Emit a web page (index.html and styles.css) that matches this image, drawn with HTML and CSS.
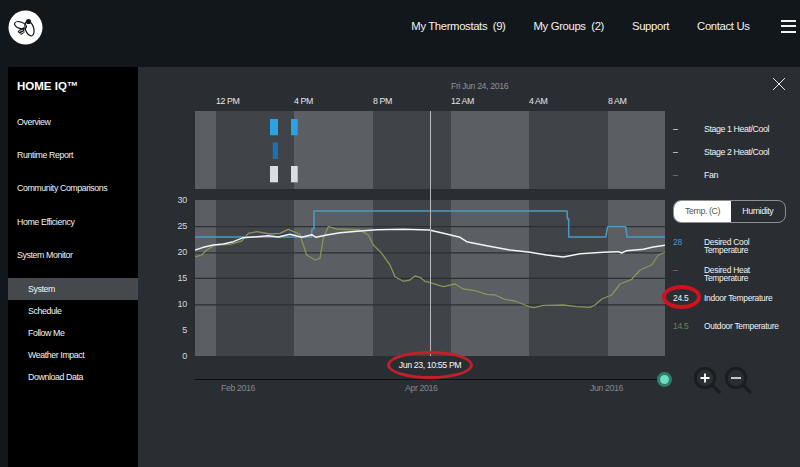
FILE: index.html
```html
<!DOCTYPE html>
<html lang="en">
<head>
<meta charset="utf-8">
<title>Home IQ</title>
<link rel="stylesheet" href="styles.css">
</head>
<body>
<header class="topbar">
  <svg class="logo" viewBox="8 10 35 35" width="35" height="35" aria-hidden="true">
    <circle cx="25.5" cy="27.500" r="17" fill="#fff"/>
    <g fill="none" stroke="#12171b" stroke-width="1.200">
      <ellipse cx="20.500" cy="25.300" rx="6.200" ry="3.200" transform="rotate(18 20.500 25.300)"/>
      <ellipse cx="29.500" cy="28.500" rx="4.200" ry="7.600" transform="rotate(-18 29.500 28.500)"/>
    </g>
    <circle cx="28.500" cy="21.500" r="2.600" fill="#12171b"/>
    <path d="M24 27l-5 3-1.500 2 2.500 1.500 1 1.500 3.500-2.500z" fill="#12171b"/>
    <path d="M19 31.500l4-1.500M20.500 33.500l3.500-1.800" stroke="#fff" stroke-width=".8"/>
  </svg>
  <nav class="topnav">
    <a>My Thermostats&nbsp; (9)</a>
    <a>My Groups&nbsp; (2)</a>
    <a>Support</a>
    <a>Contact Us</a>
    <span class="burger"><i></i><i></i><i></i></span>
  </nav>
</header>
<div class="main">
  <aside class="sidebar">
    <h1 class="brand">HOME IQ™</h1>
    <ul class="menu">
      <li>Overview</li>
      <li>Runtime Report</li>
      <li>Community Comparisons</li>
      <li>Home Efficiency</li>
      <li>System Monitor</li>
    </ul>
    <ul class="submenu">
      <li class="active">System</li>
      <li>Schedule</li>
      <li>Follow Me</li>
      <li>Weather Impact</li>
      <li>Download Data</li>
    </ul>
  </aside>
  <section class="panel">
    <div class="yaxis">
      <span>30</span><span>25</span><span>20</span><span>15</span><span>10</span><span>5</span><span>0</span>
    </div>
    <div class="chart">
      <div class="bandgrid dayrow"><span class="day">Fri Jun 24, 2016</span></div>
      <div class="bandgrid ticks">
        <span>12 PM</span><span>4 PM</span><span>8 PM</span><span>12 AM</span><span>4 AM</span><span>8 AM</span>
      </div>
      <div class="strip">
        <svg class="overlay" viewBox="195 111 470 78" aria-hidden="true">
          <rect x="270" y="119" width="8" height="16.300" fill="#2ba3e0"/>
          <rect x="291" y="119" width="6.700" height="16.300" fill="#2ba3e0"/>
          <rect x="272.700" y="142.300" width="5.300" height="16.700" fill="#1f6fb2"/>
          <rect x="270" y="166" width="8" height="16.300" fill="#dcdde0"/>
          <rect x="291" y="166" width="6.700" height="16.300" fill="#dcdde0"/>
        </svg>
      </div>
      <div class="plot">
        <svg class="overlay" viewBox="195 200 470 156" aria-hidden="true">
          <g stroke="#2c2f33" stroke-width="1.200">
            <line x1="195" x2="665" y1="226.700" y2="226.700"/>
            <line x1="195" x2="665" y1="252.800" y2="252.800"/>
            <line x1="195" x2="665" y1="278.300" y2="278.300"/>
            <line x1="195" x2="665" y1="304.800" y2="304.800"/>
          </g>
          <g fill="none" stroke-linejoin="round">
            <polyline stroke="#4b9cc4" stroke-width="1.500" points="195,237 311.500,237 312,229 314,229 314,211 567,211 567.500,219 568.700,219 568.700,237 605.700,237 607.700,226.700 625.700,226.700 627,237 665,237"/>
            <polyline stroke="#83975a" stroke-width="1.300" points="195,257 201.700,255 206.700,250 215,245 230,244.300 241.700,241 248.300,233.300 256.700,231.700 270,234 280,233.300 288.300,229.300 300,234.300 303.300,245 306.700,255 315,260 320,258.300 323.300,238.300 328.300,226.700 336.700,229 360,230 368.300,235 373.300,245 381.700,253.300 390,265 395,276.700 403.300,281.300 410,280 415,276 420,277.300 425,281.300 429.300,282.300 443.300,286.700 455,284 463.300,289 475,290.700 486.700,294.300 495,295 505,299.300 515,301 530,307 534,307.700 543.300,305.300 563.300,305 576.700,306.700 590,307.300 595,305 601.700,299 611.700,295 620,284 631.700,279.300 640,270 651.700,265 658.300,255 665,252.300"/>
            <polyline stroke="#f4f4f4" stroke-width="1.400" points="195,250 203.300,247.300 213.300,245 223.300,244 233.300,241.700 243.300,237.700 256.700,236.700 268.300,235.700 278.300,237 290,234.300 301.700,237.300 311.700,234.700 316,237.300 326.700,235 340,232.700 363.300,230.700 376.700,229.700 403.300,229.300 429.300,230 443.300,233.300 460,237.300 466.700,241.700 486.700,245.700 510,250 530,252.300 546.700,255 563.300,257 580,253.700 603.300,252.300 618.300,251.700 621.700,253 626.700,250.700 643.300,249.300 653.300,247 665,245.300"/>
          </g>
        </svg>
      </div>
      <div class="cursor"></div>
      <div class="pillrow"><span class="pill">Jun 23, 10:55 PM</span></div>
      <div class="timeline">
        <span class="handle"></span>
      </div>
      <div class="months"><span>Feb 2016</span><span>Apr 2016</span><span>Jun 2016</span></div>
    </div>
    <div class="side">
      <svg class="close" viewBox="0 0 12 12" width="12" height="12" aria-hidden="true">
        <path d="M0 0l12 12M12 0L0 12" stroke="#e8e8e8" stroke-width="1" fill="none"/>
      </svg>
      <ul class="stages">
        <li><span class="val">–</span><span>Stage 1 Heat/Cool</span></li>
        <li><span class="val">–</span><span>Stage 2 Heat/Cool</span></li>
        <li><span class="val dim">–</span><span>Fan</span></li>
      </ul>
      <div class="toggle"><span class="on">Temp. (C)</span><span>Humidity</span></div>
      <ul class="series">
        <li><span class="val cool">28</span><span>Desired Cool<br>Temperature</span></li>
        <li><span class="val heat">–</span><span>Desired Heat<br>Temperature</span></li>
        <li><span class="val ringed">24.5</span><span>Indoor Temperature</span></li>
        <li><span class="val outdoor">14.5</span><span>Outdoor Temperature</span></li>
      </ul>
      <div class="zooms">
        <svg viewBox="0 0 28 28" width="28" height="28" aria-hidden="true">
          <circle cx="11" cy="11" r="9.700" fill="none" stroke="#1a1d21" stroke-width="3"/>
          <path d="M18 18l7 7" stroke="#1a1d21" stroke-width="3.500" stroke-linecap="round"/>
          <path d="M6.500 11h9M11 6.500v9" stroke="#fff" stroke-width="1.800"/>
        </svg>
        <svg viewBox="0 0 28 28" width="28" height="28" aria-hidden="true">
          <circle cx="11" cy="11" r="9.700" fill="none" stroke="#1a1d21" stroke-width="3"/>
          <path d="M18 18l7 7" stroke="#1a1d21" stroke-width="3.500" stroke-linecap="round"/>
          <path d="M6 11h10" stroke="#d8d8d8" stroke-width="1.800"/>
        </svg>
      </div>
    </div>
  </section>
</div>
</body>
</html>
```
FILE: styles.css
```css
* { box-sizing: border-box; }
html, body { margin: 0; padding: 0; }
body {
  width: 800px;
  height: 467px;
  overflow: hidden;
  background: #12171b;
  color: #fff;
  font-family: "Liberation Sans", Arial, sans-serif;
}
ul { list-style: none; margin: 0; padding: 0; }

.topbar {
  height: 67px;
  display: flex;
  justify-content: space-between;
  align-items: flex-start;
  padding: 10px 4px 0 8px;
}
.logo { display: block; }
.topnav {
  display: flex;
  align-items: center;
  gap: 28px;
  height: 32px;
  font-size: 11.300px;
  letter-spacing: -.35px;
  color: #f2f2f2;
}
.burger {
  display: flex;
  flex-direction: column;
  gap: 3.500px;
  width: 15.500px;
  margin-left: 3px;
}
.burger i { display: block; height: 2px; background: #f2f2f2; }

.main { display: flex; height: 400px; padding-left: 8px; }

.sidebar { width: 130px; flex: none; background: #000; }
.brand {
  margin: 0;
  padding: 11px 0 0 9px;
  height: 39px;
  line-height: 16px;
  font-size: 11.500px;
  font-weight: 700;
}
.menu li {
  height: 33.200px;
  line-height: 33px;
  padding-left: 9px;
  font-size: 8.800px;
  letter-spacing: -.4px;
  color: #f4f4f4;
}
.submenu { margin-top: 6px; }
.submenu li {
  height: 22px;
  line-height: 22px;
  padding-left: 20px;
  font-size: 8.800px;
  letter-spacing: -.4px;
  color: #f4f4f4;
}
.submenu li.active { background: #45494e; }

.panel {
  flex: 1;
  display: flex;
  background: #2a2e33;
  font-size: 8.800px;
  letter-spacing: -.4px;
}
.yaxis {
  width: 49px;
  margin-top: 128px;
  height: 166px;
  display: flex;
  flex-direction: column;
  justify-content: space-between;
  align-items: flex-end;
  color: #d6d6d6;
  font-size: 9px;
  letter-spacing: -.3px;
  line-height: 10px;
}
.chart {
  position: relative;
  width: 470px;
  margin-left: 8px;
  flex: none;
}
.bandgrid {
  display: grid;
  grid-template-columns: 21px 78px 79px 78px 78px 79px 57px;
}
.dayrow { height: 24px; padding-top: 14px; line-height: 10px; }
.day {
  grid-column: 5 / 8;
  color: #8e9094;
  white-space: nowrap;
}
.ticks {
  height: 20px;
  padding-top: 5px;
  line-height: 10px;
  color: #e6e6e6;
}
.ticks span:first-child { grid-column: 2; }

.strip, .plot {
  position: relative;
  background: linear-gradient(to right,
    #5b5e62 0 21px, #404347 21px 99px, #5b5e62 99px 178px,
    #404347 178px 256px, #5b5e62 256px 334px, #404347 334px 413px,
    #5b5e62 413px 470px);
}
.strip { height: 78px; }
.plot { height: 156px; margin-top: 11px; }
.overlay {
  position: absolute;
  inset: 0;
  width: 100%;
  height: 100%;
  display: block;
}
.cursor {
  position: absolute;
  left: 234.500px;
  top: 44px;
  width: 1.600px;
  height: 245px;
  background: #b5b7ba;
}
.pillrow {
  display: flex;
  justify-content: center;
  margin-top: -5px;
  position: relative;
}
.pill {
  width: 86px;
  height: 28px;
  border: 3px solid #c4202c;
  border-radius: 50%;
  display: flex;
  align-items: center;
  justify-content: center;
  color: #f5f5f5;
  white-space: nowrap;
}
.timeline {
  position: relative;
  height: 1px;
  background: #0e1012;
}
.handle {
  position: absolute;
  right: -7px;
  top: -7px;
  width: 15px;
  height: 15px;
  border-radius: 50%;
  background: #6ddcc0;
  border: 3px solid #2f7d6c;
}
.months {
  display: grid;
  grid-template-columns: 184px 185px 75px;
  padding-left: 26px;
  padding-top: 3px;
  line-height: 10px;
  color: #85888c;
}

.side {
  position: relative;
  flex: 1;
  margin-left: 8px;
  color: #f2f2f2;
  line-height: 8.400px;
}
.close {
  position: absolute;
  right: 15px;
  top: 11px;
}
.stages { padding-top: 57.500px; }
.stages li { display: flex; height: 23.200px; }
.val { width: 31px; flex: none; }
.dim { color: #8a8c90; }
.toggle {
  margin-top: 5.500px;
  width: 112.500px;
  height: 23.500px;
  display: grid;
  grid-template-columns: 57px 1fr;
  border: 1px solid #8d9094;
  border-radius: 8px;
  overflow: hidden;
  line-height: 21px;
  text-align: center;
}
.toggle .on { background: #fff; color: #555; }
.series {
  padding-top: 14.500px;
  font-size: 8.400px;
  letter-spacing: -.25px;
}
.series li { display: flex; height: 28px; }
.cool { color: #3f9ad0; }
.heat { color: #b5713f; }
.outdoor { color: #6f8050; }
.ringed { position: relative; color: #f5f5f5; }
.ringed::after {
  content: "";
  box-sizing: border-box;
  position: absolute;
  left: -11px;
  top: -9px;
  width: 39px;
  height: 24px;
  border: 4px solid #d0121f;
  border-radius: 50%;
}
.zooms {
  position: absolute;
  left: 21px;
  top: 300px;
  display: flex;
  gap: 2.500px;
}
```
